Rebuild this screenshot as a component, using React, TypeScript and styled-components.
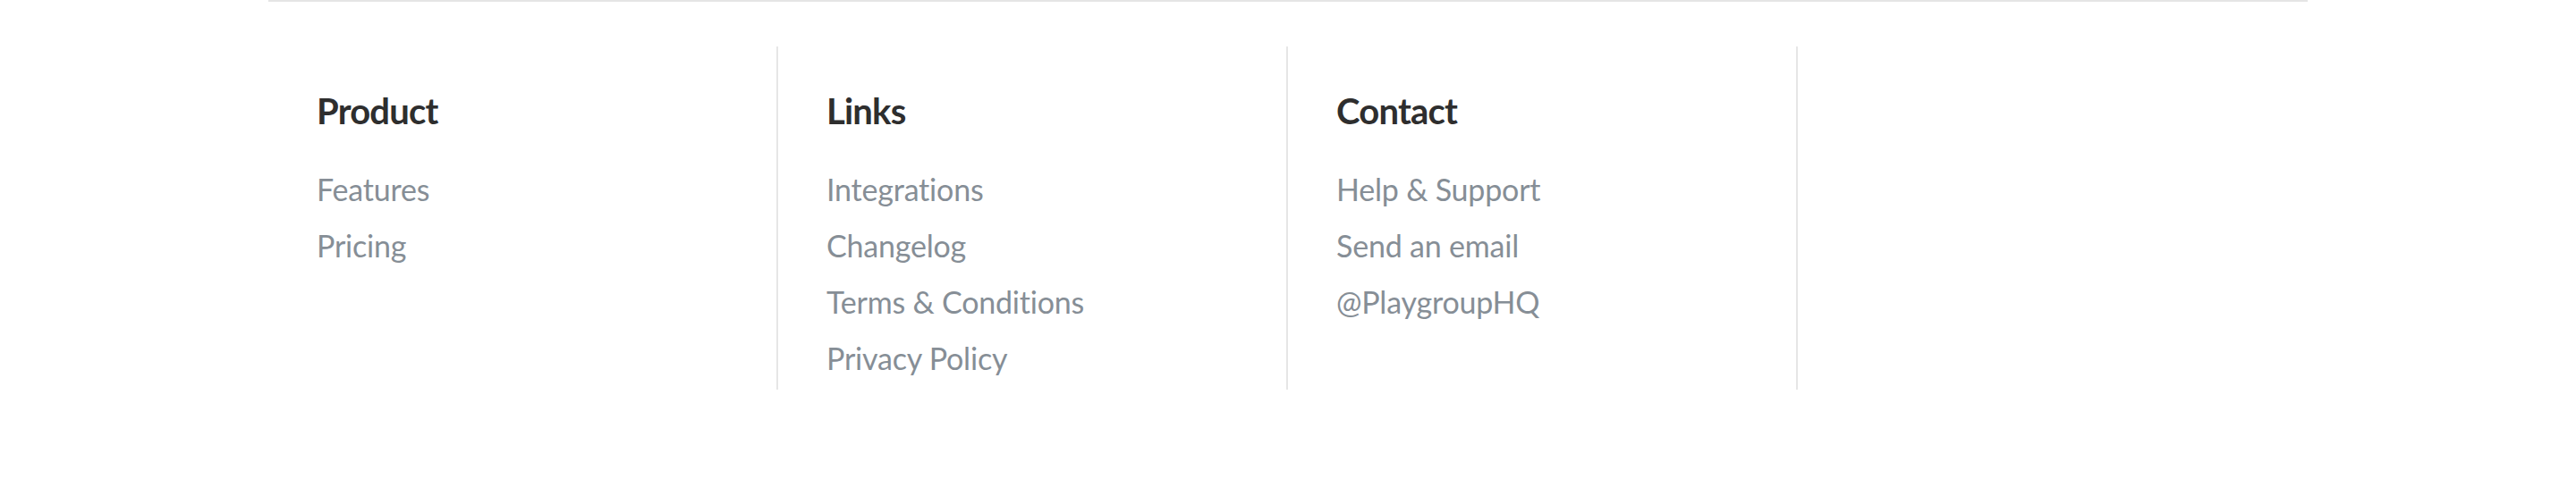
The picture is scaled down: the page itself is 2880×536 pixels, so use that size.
import React from "react";
import styled, { createGlobalStyle } from "styled-components";

const GlobalStyle = createGlobalStyle`
  html, body {
    margin: 0;
    padding: 0;
    background: #ffffff;
  }
  body {
    font-family: Lato, "Open Sans", "Liberation Sans", sans-serif;
    -webkit-font-smoothing: antialiased;
  }
`;

const Footer = styled.footer`
  width: 2280px;
  margin: 0 auto;
  border-top: 2px solid #e5e5e5;
  padding-top: 50px;
  box-sizing: border-box;
`;

const Columns = styled.div`
  display: grid;
  grid-template-columns: repeat(4, 570px);
`;

const Column = styled.section<{ $divider: boolean }>`
  box-sizing: border-box;
  padding: 47px 54px 4px 54px;
  border-right: 2px solid ${({ $divider }) => ($divider ? "#e6e6e6" : "transparent")};
  display: flex;
  flex-direction: column;
`;

const Heading = styled.h3`
  margin: 0 0 31px;
  font-size: 40px;
  line-height: 50px;
  font-weight: 700;
  color: #2e2e2e;
  letter-spacing: -0.8px;
`;

const LinkList = styled.ul`
  list-style: none;
  margin: 0;
  padding: 0;
`;

const LinkItem = styled.li`
  font-size: 34px;
  line-height: 63px;
  height: 63px;
`;

const FooterLink = styled.a`
  color: #868e96;
  text-decoration: none;
  font-weight: 400;
  letter-spacing: -0.2px;
`;

type Group = { title: string; links: string[] };

const groups: Group[] = [
  { title: "Product", links: ["Features", "Pricing"] },
  {
    title: "Links",
    links: ["Integrations", "Changelog", "Terms & Conditions", "Privacy Policy"],
  },
  { title: "Contact", links: ["Help & Support", "Send an email", "@PlaygroupHQ"] },
];

export default function App() {
  return (
    <>
      <GlobalStyle />
      <Footer>
        <Columns>
          {groups.map((g) => (
            <Column key={g.title} $divider>
              <Heading>{g.title}</Heading>
              <LinkList>
                {g.links.map((l) => (
                  <LinkItem key={l}>
                    <FooterLink href="#">{l}</FooterLink>
                  </LinkItem>
                ))}
              </LinkList>
            </Column>
          ))}
          <Column $divider={false} />
        </Columns>
      </Footer>
    </>
  );
}
